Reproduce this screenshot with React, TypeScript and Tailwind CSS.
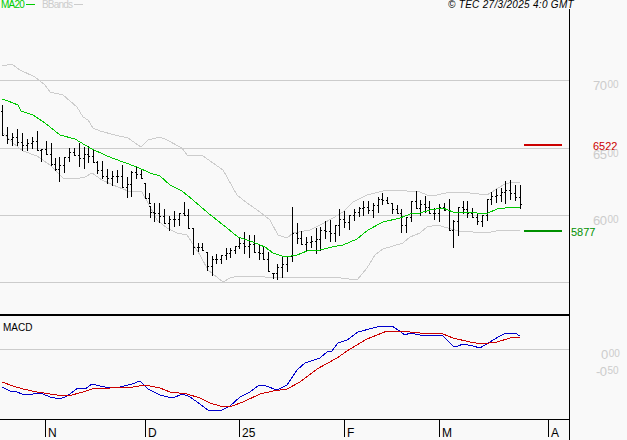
import React from 'react';

// [x, high y, low y] in page pixels
const bars: number[][] = [
  [2, 105, 135], [7, 127, 143], [12, 133, 145], [17, 129, 145], [22, 133, 150], [27, 139, 150], [32, 137, 148], [37, 131, 150],
  [41, 149, 161], [46, 141, 154], [51, 143, 165], [55, 158, 170], [59, 157, 181], [64, 157, 172], [69, 148, 161], [74, 148, 155],
  [79, 143, 166], [84, 147, 168], [88, 146, 162], [93, 150, 162], [97, 161, 173], [102, 161, 178], [107, 169, 183], [112, 171, 185],
  [117, 170, 182], [122, 165, 187], [127, 177, 197], [131, 171, 196], [136, 166, 178], [141, 169, 178], [145, 183, 198], [149, 193, 203],
  [150, 206, 217], [154, 203, 221], [159, 203, 222], [164, 209, 223], [169, 216, 230], [174, 211, 226], [179, 213, 225], [184, 202, 215],
  [188, 209, 228], [193, 228, 254], [198, 243, 251], [202, 243, 250], [207, 252, 270],
  [212, 256, 275], [216, 254, 263], [221, 255, 263], [226, 248, 259], [230, 248, 257], [235, 246, 253], [239, 238, 248], [244, 232, 253],
  [249, 235, 257], [254, 235, 252], [259, 245, 259], [263, 246, 259], [268, 252, 271], [273, 273, 278], [277, 264, 279], [282, 256, 277],
  [287, 256, 271], [292, 207, 261], [297, 223, 243], [301, 231, 244], [306, 237, 251], [311, 236, 247], [316, 228, 253], [320, 227, 250],
  [325, 221, 238], [330, 220, 241], [335, 225, 241], [339, 209, 235], [344, 211, 227], [349, 215, 229], [354, 209, 220], [359, 207, 216],
  [363, 201, 215], [368, 201, 213], [373, 203, 217], [378, 197, 212], [382, 193, 204], [387, 197, 203], [392, 203, 213], [397, 205, 213],
  [401, 209, 232], [406, 217, 232], [411, 201, 221], [416, 191, 208], [420, 200, 215], [425, 196, 212], [429, 201, 213], [434, 208, 219],
  [439, 204, 221], [444, 203, 210], [449, 199, 230], [453, 220, 247], [458, 207, 235], [463, 201, 213], [467, 201, 217], [472, 208, 217],
  [477, 213, 224], [482, 215, 226], [487, 199, 220], [491, 192, 204], [496, 189, 202], [501, 188, 201], [505, 181, 203], [510, 180, 199],
  [515, 185, 200], [520, 185, 208],
];

const ma20 =
  '2,99 8,101 18,105 21,111 33,115 45,123 60,135 75,139 90,148 107,156 123,162 137,167 150,173 160,176 170,185 182,191 193,200 208,213 227,228 238,237 253,242 265,247 273,253 285,257 297,255 307,251 320,250 332,247 343,245 357,239 368,230 383,222 400,218 413,213 420,213 430,210 443,208 453,212 470,212 477,213 488,213 497,209 513,207 520,208';
const bandUpper =
  '2,66 12,64 20,70 35,77 45,85 50,92 63,95 77,107 83,117 88,120 93,128 100,131 115,135 128,138 141,147 148,140 160,137 167,140 182,148 187,155 203,156 223,170 237,195 247,203 260,212 270,220 278,235 287,238 293,233 310,230 320,225 333,218 343,212 353,202 367,195 387,190 407,191 420,192 427,195 437,195 450,192 470,193 487,195 503,185 512,182 520,182';
const bandLower =
  '2,132 13,143 23,151 37,156 50,165 63,178 75,179 85,177 92,173 102,180 113,185 128,191 142,192 148,203 157,220 167,228 177,233 187,235 200,255 208,270 223,282 230,278 238,276 265,277 280,277 297,278 310,277 333,277 357,280 367,268 375,255 383,249 403,243 410,237 420,233 427,227 437,225 448,228 458,231 487,233 500,230 520,231';
const macdLine =
  '2,387 10,391 17,392 22,394 33,394 38,393 43,394 50,397 60,399 67,396 78,388 85,389 92,384 100,386 110,388 120,387 132,384 140,381 148,389 160,395 172,398 183,394 190,397 200,404 208,410 222,410 230,406 240,397 250,392 258,386 263,385 277,390 287,385 297,370 305,363 320,358 327,352 332,351 338,343 347,340 358,332 377,327 392,326 398,330 405,335 410,333 420,335 430,335 443,336 453,346 458,346 463,344 473,346 480,348 488,343 500,336 506,333 515,333 520,336';
const signalLine =
  '2,382 13,386 23,389 37,392 57,395 68,396 83,392 95,388 110,388 133,387 145,385 160,388 170,392 187,394 200,398 210,403 220,406 232,406 243,402 260,394 273,391 287,389 300,382 317,369 337,358 350,349 367,339 387,331 400,331 420,333 430,333 443,334 453,338 470,342 482,344 497,342 510,338 520,337';

const clamp = (v: number, lo: number, hi: number) => Math.min(hi, Math.max(lo, v));

function barPath() {
  const closes = bars.map(([, hi, lo], i) => {
    const next = bars[i + 1];
    return Math.round(next ? clamp((next[1] + next[2]) / 2, hi, lo) : lo - 4);
  });
  return bars
    .map(([x, hi, lo], i) => {
      const open = Math.round(clamp(i ? closes[i - 1] : hi + 6, hi, lo));
      return `M${x + 0.5} ${hi}V${lo + 1}M${x - 1} ${open + 0.5}H${x}M${x + 1} ${closes[i] + 0.5}H${x + 2}`;
    })
    .join('');
}

const ticks = [
  { label: 'N', line: 'left-[45px]', text: 'left-[48px]' },
  { label: 'D', line: 'left-[145px]', text: 'left-[148px]' },
  { label: '25', line: 'left-[239px]', text: 'left-[242px]' },
  { label: 'F', line: 'left-[344px]', text: 'left-[347px]' },
  { label: 'M', line: 'left-[439px]', text: 'left-[442px]' },
  { label: 'A', line: 'left-[548px]', text: 'left-[551px]' },
];

function Scale({ big, small, className }: { big: string; small: string; className: string }) {
  return (
    <span className={`absolute flex items-start text-[#cccccc] leading-[10px] ${className}`}>
      <span className="text-[13px] tracking-[-0.5px]">{big}</span>
      <span className="text-[10px] ml-[1px] -mt-[1px]">{small}</span>
    </span>
  );
}

export default function App() {
  return (
    <div className="w-[627px] h-[440px] overflow-hidden bg-[#f9f9f9] text-black font-['Liberation_Sans',sans-serif] flex flex-col">
      {/* legend + copyright */}
      <div className="h-[9px] flex justify-between items-start leading-[9px] pr-[53px] pl-[1px] whitespace-nowrap relative z-10">
        <div className="flex items-center text-[10px]">
          <span className="text-[#00cc00] tracking-[-0.8px]">MA20</span>
          <span className="w-[9px] h-[1px] bg-[#00cc00] ml-[2px]" />
          <span className="text-[#cccccc] ml-[7px] tracking-[-0.8px]">BBands</span>
          <span className="w-[9px] h-[1px] bg-[#cccccc] ml-[2px]" />
        </div>
        <span className="italic text-[10px] tracking-[0.3px]">© TEC 27/3/2025 4:0 GMT</span>
      </div>

      <div className="flex-1 flex">
        <div className="w-[570px] flex flex-col border-r border-black">
          {/* price panel */}
          <div className="h-[307px] border-b-2 border-black">
            <svg width="569" height="305" viewBox="0 9 569 305" shapeRendering="crispEdges" className="block">
              <path d="M0 80.5H569M0 148.5H569M0 215.5H569M0 282.5H569" stroke="#cccccc" fill="none" />
              <polyline points={bandUpper} stroke="#cccccc" fill="none" />
              <polyline points={bandLower} stroke="#cccccc" fill="none" />
              <path d={barPath()} stroke="#000000" fill="none" />
              <polyline points={ma20} stroke="#00c800" fill="none" />
              <rect x="524" y="144" width="38" height="2" fill="#cc0000" />
              <rect x="524" y="230" width="38" height="2" fill="#009000" />
            </svg>
          </div>
          {/* macd panel */}
          <div className="h-[104px] border-b border-black relative">
            <span className="absolute left-[3px] top-[7px] text-[10px] leading-none">MACD</span>
            <svg width="569" height="103" viewBox="0 316 569 103" shapeRendering="crispEdges" className="block">
              <path d="M0 349.5H569" stroke="#cccccc" fill="none" />
              <polyline points={macdLine} stroke="#0000cc" fill="none" />
              <polyline points={signalLine} stroke="#cc0000" fill="none" />
            </svg>
          </div>
          {/* time axis */}
          <div className="flex-1 relative -mr-[1px]">
            {ticks.map((t) => (
              <React.Fragment key={t.label}>
                <span className={`absolute top-0 w-[1px] h-[17px] bg-black ${t.line}`} />
                <span className={`absolute top-[7px] text-[12px] leading-none ${t.text}`}>{t.label}</span>
              </React.Fragment>
            ))}
          </div>
        </div>

        {/* value scale */}
        <div className="flex-1 relative">
          <Scale big="70" small="00" className="left-[23px] top-[72px]" />
          <span className="absolute left-[23px] top-[133px] text-[11px] leading-[8px] text-[#cc0000]">6522</span>
          <Scale big="65" small="00" className="left-[23px] top-[141px]" />
          <Scale big="60" small="00" className="left-[23px] top-[207px]" />
          <span className="absolute left-[1px] top-[219px] text-[11px] leading-[8px] text-[#009000]">5877</span>
          <Scale big="0" small="00" className="left-[31px] top-[341px]" />
          <Scale big="-0" small="50" className="left-[26px] top-[358px]" />
        </div>
      </div>
    </div>
  );
}
